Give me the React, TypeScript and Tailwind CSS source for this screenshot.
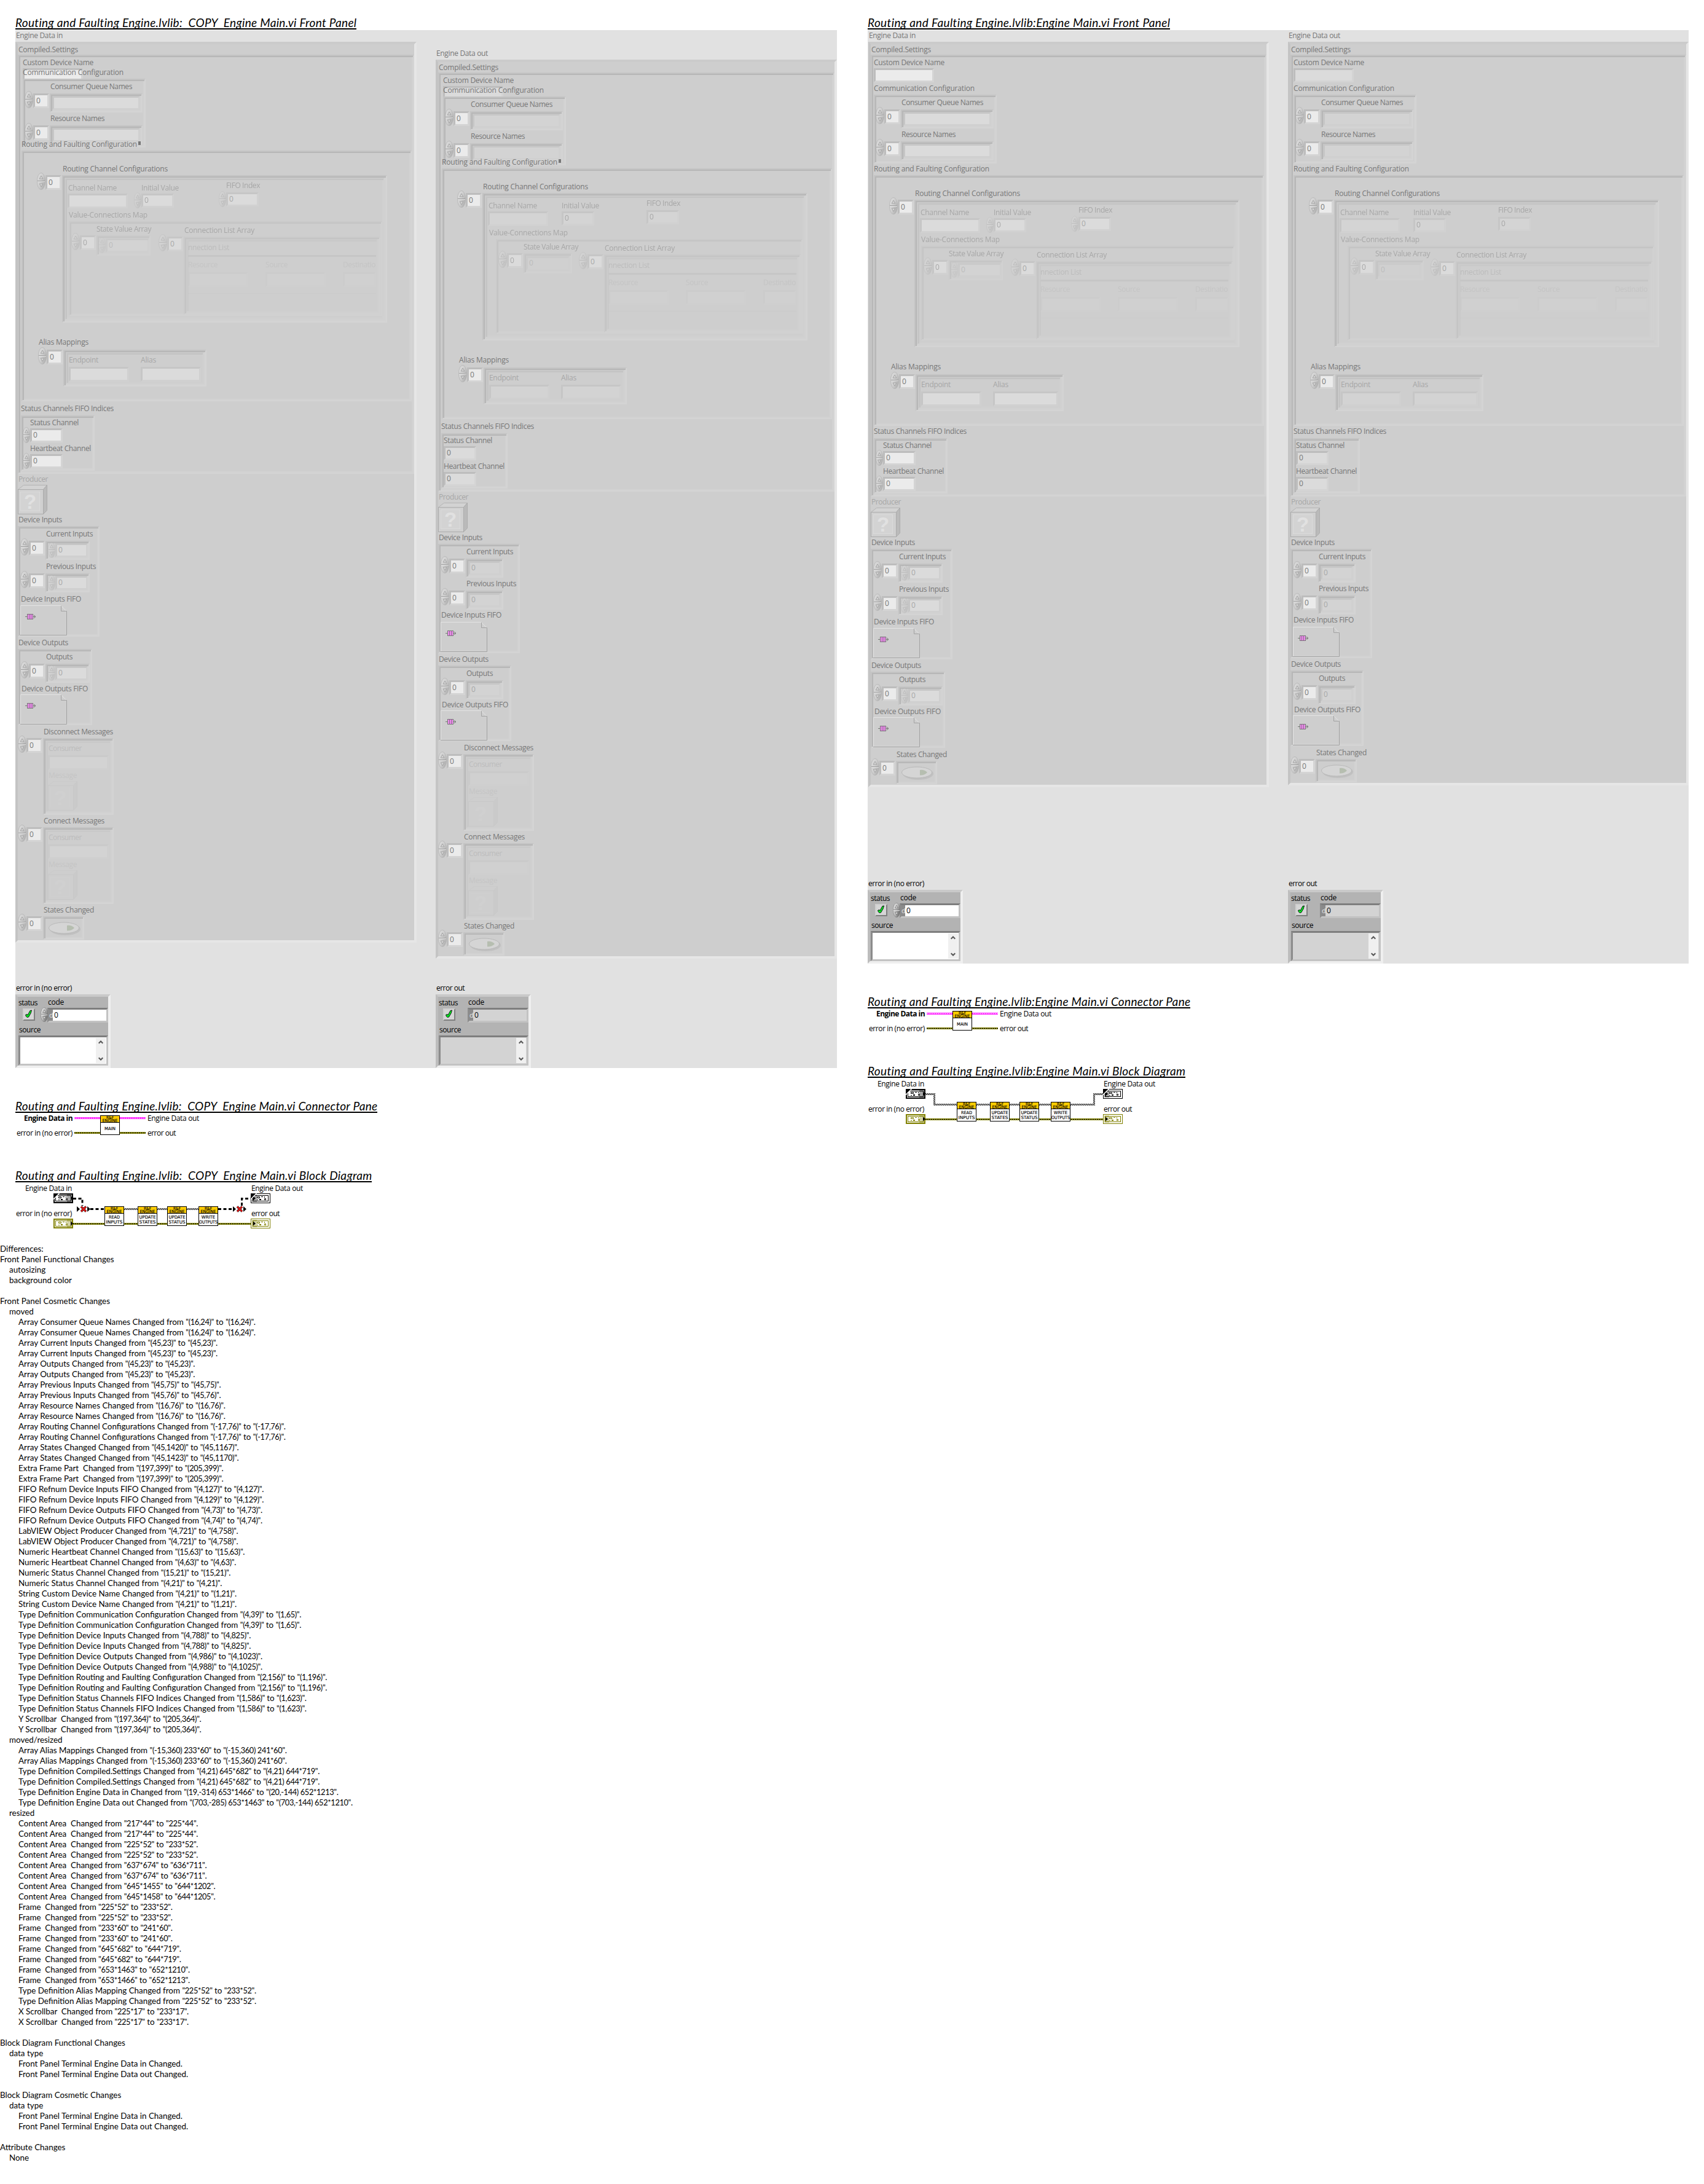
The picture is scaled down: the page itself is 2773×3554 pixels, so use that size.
import React, { useLayoutEffect, useRef } from "react";

type Box = { x: number; y: number; w?: number; h?: number };

const place = ({ x, y, w, h }: Box): React.CSSProperties => ({ left: x, top: y, width: w, height: h });

/* Text whose tracking is adjusted after measuring so that it spans a given width. */
function Fit({ text, w, className = "" }: { text: string; w?: number; className?: string }) {
  const ref = useRef<HTMLSpanElement>(null);
  useLayoutEffect(() => {
    const el = ref.current;
    if (!el || !w) return;
    el.style.letterSpacing = "0px";
    const natural = el.getBoundingClientRect().width;
    el.style.letterSpacing = `${(w - natural) / text.length}px`;
  }, [text, w]);
  return (
    <span ref={ref} className={`inline-block whitespace-pre ${className}`}>
      {text}
    </span>
  );
}

const labelWidths: Record<string, number> = {
  "Engine Data in": 76,
  "Engine Data out": 84,
  "Compiled.Settings": 97,
  "Custom Device Name": 115,
  "Communication Configuration": 164,
  "Consumer Queue Names": 133,
  "Resource Names": 88,
  "Routing and Faulting Configuration": 188,
  "Routing Channel Configurations": 171,
  "Channel Name": 79,
  "Initial Value": 61,
  "FIFO Index": 55,
  "Value-Connections Map": 128,
  "State Value Array": 89,
  "Connection List Array": 114,
  "nnection List": 67,
  Resource: 48,
  Source: 36,
  Destinatio: 53,
  "Alias Mappings": 81,
  Endpoint: 48,
  Alias: 25,
  "Status Channels FIFO Indices": 151,
  "Status Channel": 79,
  "Heartbeat Channel": 99,
  Producer: 48,
  "Device Inputs": 71,
  "Current Inputs": 76,
  "Previous Inputs": 81,
  "Device Inputs FIFO": 98,
  "Device Outputs": 81,
  Outputs: 43,
  "Device Outputs FIFO": 108,
  "Disconnect Messages": 113,
  "Connect Messages": 99,
  Consumer: 54,
  Message: 46,
  "States Changed": 82,
  "error in (no error)": 91,
  "error out": 46,
  status: 31,
  code: 26,
  source: 35,
};

/* Caption anchored at its left edge and vertical centre. */
function Label({ x, y, t, dark, bold, w }: { x: number; y: number; t: string; dark?: boolean; bold?: boolean; w?: number }) {
  return (
    <div
      className={`absolute h-4 font-['Open_Sans',sans-serif] text-[12px] leading-4 whitespace-pre ${dark ? "text-black" : "text-[#777777]"} ${bold ? "font-bold" : ""}`}
      style={place({ x, y: y - 8 })}
    >
      <Fit text={t} w={w ?? labelWidths[t]} />
    </div>
  );
}

function Group({ x, y, className = "", children }: { x: number; y: number; className?: string; children: React.ReactNode }) {
  return (
    <div className={`absolute ${className}`} style={place({ x, y })}>
      {children}
    </div>
  );
}

/* Sunken LabVIEW border, four pixels thick. */
function Frame(b: Box) {
  return (
    <div
      className="absolute border-2 border-t-[#c4c4c4] border-r-[#d4d4d4] border-b-[#d4d4d4] border-l-[#c4c4c4] shadow-[inset_2px_2px_0_#b7b7b7,inset_-2px_-2px_0_#d2d2d2]"
      style={place(b)}
    />
  );
}

function Spinner({ x, y, w = 14, h = 28, strong }: Box & { strong?: boolean }) {
  return (
    <svg className={`absolute ${strong ? "" : "opacity-50"}`} style={place({ x, y, w, h })} viewBox="0 0 14 28" preserveAspectRatio="none">
      <defs>
        <linearGradient id={strong ? "spin-strong" : "spin"} x1="0" x2="1" y1="0" y2="0.6">
          <stop offset="0" stopColor="#f0f0f0" />
          <stop offset="0.55" stopColor={strong ? "#bdbdbd" : "#d2d2d2"} />
          <stop offset="1" stopColor={strong ? "#6f6f6f" : "#949494"} />
        </linearGradient>
      </defs>
      <ellipse cx="7" cy="14" rx="6.6" ry="13.6" fill={strong ? "url(#spin-strong)" : "url(#spin)"} stroke={strong ? "#7a7a7a" : "#979797"} strokeWidth="0.7" />
      <path d="M1 13.5H13" stroke="#6c6c6c" />
      <path d="M1 14.5H13" stroke="#f4f4f4" />
      <path d="M7 5L9.8 10H4.2Z" fill="#dedede" stroke="#666" strokeWidth="0.8" />
      <path d="M7 23L4.2 18H9.8Z" fill="#dedede" stroke="#666" strokeWidth="0.8" />
    </svg>
  );
}

/* Sunken entry field; the coordinates are those of the fill, the bevel surrounds it. */
function Field({ x, y, w = 20, h = 17, value, indicator }: Box & { value?: string; indicator?: boolean }) {
  return (
    <>
      <div
        className="absolute border-3 border-t-[#bdbdbd] border-r-[#d4d4d4] border-b-[#d4d4d4] border-l-[#bdbdbd]"
        style={place({ x: x - 3, y: y - 3, w: w + 6, h: h + 6 })}
      >
        <div className={`size-full ${indicator ? "bg-[#dbdbdb]" : "bg-[#ebebeb]"}`} />
      </div>
      {value !== undefined && <Label x={x + 2} y={y + h / 2 - 0.5} t={value} />}
    </>
  );
}

function Numeric({ x, y, w = 47, out, value = "0" }: Box & { out?: boolean; value?: string }) {
  return (
    <>
      <Field x={x} y={y} w={w} h={17} value={value} indicator={out} />
      {!out && <Spinner x={x - 15} y={y - 5} w={12} h={26} />}
    </>
  );
}

/* Array shell: index control on the left, framed element area on the right. */
function ArrayShell({ x, y, w = 0, h = 0, children }: Box & { children?: React.ReactNode }) {
  return (
    <Group x={x} y={y}>
      <Field x={-24} y={3} w={20} h={18} value="0" />
      <Spinner x={-41} y={-4} w={14} h={28} />
      <Frame x={0} y={0} w={w} h={h} />
      {children}
    </Group>
  );
}

function Cube({ x, y }: Box) {
  return (
    <svg className="absolute opacity-50" style={place({ x, y, w: 48, h: 48 })} viewBox="0 0 48 48">
      <path d="M0.5 7.5L9.5 0.5H47.5L41.5 7.5Z" fill="#d8d8d8" stroke="#9c9c9c" />
      <path d="M41.5 7.5L47.5 0.5V41.5L41.5 47.5Z" fill="#a8a8a8" stroke="#8c8c8c" />
      <rect x="0.5" y="7.5" width="41" height="40" fill="#d2d2d2" stroke="#8c8c8c" />
      <rect x="4.5" y="11.5" width="31" height="31" fill="#d9d9d9" stroke="#e8e8e8" />
      <text x="20" y="39" textAnchor="middle" className="fill-[#f4f4f4] font-['Liberation_Sans',sans-serif] text-[33px] font-bold">
        ?
      </text>
    </svg>
  );
}

function FifoRef({ x, y }: Box) {
  return (
    <svg className="absolute" style={place({ x, y, w: 76, h: 49 })} viewBox="0 0 76 49">
      <path d="M0.5 48V0.5H66L75 9.5" fill="none" stroke="#e4e4e4" />
      <path d="M66.5 1V9.5H75.5V48.5H0" fill="none" stroke="#a2a2a2" />
      <path d="M8 18.5H25M22 16L25 18.5L22 21" fill="none" stroke="#777" />
      <rect x="11.5" y="14.5" width="9" height="8" fill="#f08cf0" stroke="#777" />
      <path d="M14.5 14V23M17.5 14V23" stroke="#8a6a8a" />
    </svg>
  );
}

function MessageArray({ y, label, out }: { y: number; label: string; out?: boolean }) {
  return (
    <Group x={45} y={y}>
      <Label x={1} y={-10.5} t={label} />
      <ArrayShell x={0} y={0} w={115} h={125}>
        <div className="absolute opacity-20">
          <Frame x={4} y={4} w={107} h={117} />
          <Label x={9} y={16.5} t="Consumer" />
          <Field x={11} y={31} w={93} h={18} indicator={out} />
        </div>
        <div className="absolute opacity-10">
          <Label x={9} y={61} t="Message" />
        </div>
        <div className="absolute opacity-15">
          <Cube x={8} y={70} />
        </div>
      </ArrayShell>
    </Group>
  );
}

function StatesChanged({ y }: { y: number }) {
  return (
    <Group x={45} y={y}>
      <Label x={1} y={-10.5} t="States Changed" />
      <ArrayShell x={0} y={0} w={67} h={38}>
        <svg className="absolute opacity-50" style={place({ x: 4, y: 5, w: 58, h: 28 })} viewBox="0 0 58 28">
          <ellipse cx="32" cy="16" rx="25" ry="10" fill="#b4b4b4" />
          <ellipse cx="30" cy="14" rx="24.5" ry="9" fill="#dcdcdc" stroke="#a5a5a5" />
          <path d="M35 10Q42 9 47 14Q42 19 35 18.5Z" fill="#9fb094" />
        </svg>
      </ArrayShell>
    </Group>
  );
}

/* Numeric array with one dimmed element. */
function NumericArray({ y, label, out }: { y: number; label: string; out?: boolean }) {
  return (
    <>
      <Label x={46} y={y - 11} t={label} />
      <ArrayShell x={45} y={y} w={out ? 61 : 72} h={31}>
        <div className="absolute opacity-45">
          <Numeric x={out ? 7 : 19} y={7} w={47} out={out} />
        </div>
      </ArrayShell>
    </>
  );
}

function RoutingFrame({ x, y, out, aliasWidth }: Box & { out?: boolean; aliasWidth: number }) {
  const wide = aliasWidth - 233;
  return (
    <Group x={x} y={y}>
      <Frame x={0} y={0} w={635} h={408} />
      <Label x={67} y={30} t="Routing Channel Configurations" />
      <ArrayShell x={66} y={40} w={529} h={240} />
      <div className="absolute opacity-45">
        <Frame x={70} y={44} w={521} h={232} />
        <Label x={76} y={61} t="Channel Name" />
        <Field x={78} y={73} w={92} h={18} indicator={out} />
        <Label x={195} y={61} t="Initial Value" />
        <Numeric x={198} y={73} out={out} />
        <Label x={333} y={57} t="FIFO Index" />
        <Numeric x={336} y={71} out={out} />
        <Label x={77} y={105} t="Value-Connections Map" />
        <Frame x={out ? 88 : 77} y={115} w={out ? 499 : 510} h={154} />
        <Label x={out ? 133 : 122} y={128} t="State Value Array" />
        <ArrayShell x={out ? 133 : 122} y={138} w={out ? 79 : 88} h={33}>
          <div className="absolute opacity-45">
            <Numeric x={out ? 7 : 18} y={8} w={65} out={out} />
          </div>
        </ArrayShell>
        <Label x={265} y={130} t="Connection List Array" />
        <ArrayShell x={264} y={140} w={320} h={127} />
      </div>
      <div className="absolute opacity-20">
        <Frame x={268} y={144} w={312} h={119} />
        <Label x={271} y={158} t="nnection List" />
        <div className="absolute h-[3px] w-[306px] bg-[#a8a8a8]" style={place({ x: 271, y: 170 })} />
      </div>
      <div className="absolute opacity-10">
        <Label x={271} y={186} t="Resource" />
        <Label x={397} y={186} t="Source" />
        <Label x={523} y={186} t="Destinatio" />
        <Field x={274} y={201} w={92} h={18} indicator />
        <Field x={400} y={201} w={92} h={18} indicator />
        <Field x={526} y={201} w={48} h={18} indicator />
        <div className="absolute h-px w-[306px] bg-[#a8a8a8]" style={place({ x: 271, y: 232 })} />
      </div>
      <Label x={28} y={312} t="Alias Mappings" />
      <ArrayShell x={68} y={324} w={aliasWidth} h={60} />
      <div className="absolute opacity-45">
        <Frame x={72} y={328} w={aliasWidth - 8} h={52} />
        <Label x={77} y={341} t="Endpoint" />
        <Field x={80} y={355} w={92} h={18} indicator={out} />
        <Label x={194} y={341} t="Alias" />
        <Field x={197} y={355} w={92 + wide} h={18} indicator={out} />
      </div>
    </Group>
  );
}

/* The big "Engine Data" cluster with all of its nested controls. */
function EngineData({ x, y, w, h, out, old }: { x: number; y: number; w: number; h: number; out?: boolean; old?: boolean }) {
  const inset = old ? 8 : 5;
  const grow = old ? 0 : 37;
  return (
    <Group x={x} y={y}>
      <Label x={1} y={-10} t={out ? "Engine Data out" : "Engine Data in"} />
      <div
        className="absolute border-4 border-t-[#cbcbcb] border-r-[#e6e6e6] border-b-[#e6e6e6] border-l-[#c4c4c4] bg-[#cecece]"
        style={place({ x: 0, y: 0, w, h })}
      />
      <Label x={5} y={13} t="Compiled.Settings" />
      <Group x={4} y={21}>
        <Frame x={0} y={0} w={w - 8} h={old ? 682 : 719} />
        <Label x={inset} y={13} t="Custom Device Name" />
        <Field x={inset + 3} y={25} w={92} h={17} indicator={out} />
        <Group x={inset} y={old ? 39 : 65}>
          <div className="absolute h-[108px] w-[196px] bg-[#cecece]" style={place({ x: 2, y: 2 })} />
          <Frame x={0} y={0} w={200} h={112} />
          <Label x={45} y={12.5} t="Consumer Queue Names" />
          <ArrayShell x={44} y={24} w={151} h={31}>
            <div className="absolute opacity-45">
              <Field x={7} y={7} w={137} h={17} indicator={out} />
            </div>
          </ArrayShell>
          <Label x={45} y={64.5} t="Resource Names" />
          <ArrayShell x={44} y={76} w={151} h={31}>
            <div className="absolute opacity-45">
              <Field x={7} y={7} w={137} h={17} indicator={out} />
            </div>
          </ArrayShell>
        </Group>
        <Label x={inset} y={old ? 29 : 55} t="Communication Configuration" />
        <Label x={old ? 6 : 5} y={old ? 146 : 186} t="Routing and Faulting Configuration" />
        {old && <div className="absolute h-[6px] w-1 bg-[#777777]" style={place({ x: 196, y: 141 })} />}
        <RoutingFrame x={old ? 6 : 5} y={old ? 156 : 196} out={out} aliasWidth={old ? 233 : 241} />
        <Group x={5} y={576 + grow}>
          <Label x={0} y={0} t="Status Channels FIFO Indices" />
          <Frame x={0} y={11} w={out ? 108 : 120} h={90} />
          <Label x={out ? 4 : 15} y={23} t="Status Channel" />
          <Numeric x={out ? 7 : 18} y={35} out={out} />
          <Label x={out ? 4 : 15} y={65} t="Heartbeat Channel" />
          <Numeric x={out ? 7 : 18} y={77} out={out} />
        </Group>
      </Group>
      <Group x={0} y={grow}>
        <div className="absolute opacity-45">
          <Label x={5} y={711.5} t="Producer" />
        </div>
        <Cube x={4} y={721} />
        <Label x={5} y={777.5} t="Device Inputs" />
        <Group x={4} y={788}>
          <Frame x={0} y={0} w={133} h={out ? 178 : 180} />
          <NumericArray y={24} label="Current Inputs" out={out} />
          <NumericArray y={out ? 76 : 77} label="Previous Inputs" out={out} />
          <Label x={5} y={out ? 116 : 118.5} t="Device Inputs FIFO" />
          <FifoRef x={4} y={out ? 127 : 129} />
        </Group>
        <Group x={0} y={out ? -2 : 0}>
          <Label x={5} y={978} t="Device Outputs" />
          <Group x={4} y={988}>
            <Frame x={0} y={0} w={out ? 119 : 121} h={out ? 123 : 124} />
            <NumericArray y={24} label="Outputs" out={out} />
            <Label x={6} y={out ? 64 : 65} t="Device Outputs FIFO" />
            <FifoRef x={4} y={out ? 73 : 74} />
          </Group>
        </Group>
      </Group>
      <Group x={0} y={out ? -3 : 0}>
        {old && <MessageArray y={1133} label="Disconnect Messages" out={out} />}
        {old && <MessageArray y={1278} label="Connect Messages" out={out} />}
        <StatesChanged y={old ? 1423 : 1170} />
      </Group>
    </Group>
  );
}

function ErrorCluster({ x, y, out }: { x: number; y: number; out?: boolean }) {
  const fill = out ? "bg-[#d3d3d3]" : "bg-white";
  return (
    <Group x={x} y={y}>
      <Label x={1} y={-10} t={out ? "error out" : "error in (no error)"} dark />
      <div
        className="absolute h-[120px] w-[155px] border-4 border-t-[#c9c9c9] border-r-[#efefef] border-b-[#efefef] border-l-[#bdbdbd] bg-[#b3b3b3]"
        style={place({ x: 0, y: 0 })}
      />
      <Label x={5} y={14} t="status" dark />
      <Label x={53} y={13} t="code" dark />
      <div
        className="absolute h-[20px] w-[20px] border-2 border-t-[#cfcfcf] border-r-[#7f7f7f] border-b-[#7f7f7f] border-l-[#cfcfcf] bg-[#d6d6d6]"
        style={place({ x: 12, y: 23 })}
      />
      <svg className="absolute" style={place({ x: 15, y: 25, w: 13, h: 15 })} viewBox="0 0 13 15">
        <path d="M1.5 8.5L4 7.5L5 9L9 1.5L11.5 1L10 6L6.5 12L4 12.5L2.5 11Z" fill="#00f020" stroke="#111" strokeWidth="1" />
      </svg>
      <div
        className="absolute flex h-[24px] w-[99px] border-[3px] border-t-[#7e7e7e] border-r-[#c3c3c3] border-b-[#c3c3c3] border-l-[#8c8c8c]"
        style={place({ x: 52, y: 22 })}
      >
        <span className="h-full w-[6px] shrink-0 bg-[#8a8a8a] font-['Open_Sans',sans-serif] text-[11px] leading-[18px] text-[#e6e6e6]">d</span>
        <span className={`h-full grow pl-[2px] font-['Open_Sans',sans-serif] text-[12px] leading-[18px] text-black ${fill}`}>0</span>
      </div>
      {!out && <Spinner x={41} y={21} w={12} h={24} strong />}
      <Label x={6} y={57.5} t="source" dark />
      <div
        className={`absolute flex h-[49px] w-[146px] justify-end border-[3px] border-t-[#7e7e7e] border-r-[#c3c3c3] border-b-[#c3c3c3] border-l-[#8c8c8c] ${fill}`}
        style={place({ x: 5, y: 67 })}
      >
        <div className="my-px mr-px flex h-[41px] w-[16px] flex-col items-center justify-between bg-[#f0f0f0] py-[4px]">
          <svg className="h-[6px] w-[8px]" viewBox="0 0 8 6">
            <path d="M0.7 4.8L4 1.5L7.3 4.8" fill="none" stroke="#555" strokeWidth="2" />
          </svg>
          <svg className="h-[6px] w-[8px]" viewBox="0 0 8 6">
            <path d="M0.7 1.2L4 4.5L7.3 1.2" fill="none" stroke="#555" strokeWidth="2" />
          </svg>
        </div>
      </div>
    </Group>
  );
}

function Title({ text, w }: { text: string; w: number }) {
  return (
    <h2 className="h-6 w-fit overflow-hidden border-b-2 border-black pt-[2px] font-['Lato',sans-serif] text-[19px] leading-[22px] font-normal text-black italic">
      <Fit text={text} w={w} />
    </h2>
  );
}

/* 32 x 32 VI icon. */
function ViIcon({ x, y, lines }: { x: number; y: number; lines: string[] }) {
  return (
    <g transform={`translate(${x} ${y})`} className="stroke-black font-['DejaVu_Sans',sans-serif] text-[7.2px]" strokeWidth="0">
      <rect x="0.5" y="0.5" width="31" height="31" fill="#fff" strokeWidth="1" />
      <rect x="1" y="1" width="30" height="10.5" fill="#ffcc00" stroke="none" />
      <path d="M0 11.5H32" strokeWidth="1" />
      <g strokeWidth="0.15">
        <text x="16" y="6.2" textAnchor="middle" textLength="12" lengthAdjust="spacingAndGlyphs">R&amp;F</text>
        <text x="16" y="11.1" textAnchor="middle" textLength="25" lengthAdjust="spacingAndGlyphs">ENGINE</text>
        {lines.map((t, i) => (
          <text
            key={t}
            x="16"
            y={(lines.length === 1 ? 24.2 : 20.1) + i * 8}
            textAnchor="middle"
            textLength={t.length > 6 ? 30 : t.length * 4.5}
            lengthAdjust="spacingAndGlyphs"
          >
            {t}
          </text>
        ))}
      </g>
    </g>
  );
}

/* Block-diagram terminal for a cluster control or indicator. */
function Terminal({ x, y, color, out, corner }: { x: number; y: number; color: string; out?: boolean; corner?: boolean }) {
  const s = out ? 1 : 2;
  return (
    <g transform={`translate(${x} ${y})`}>
      <rect x={s / 2} y={s / 2} width={32 - s} height={16 - s} fill="#fff" stroke={color} strokeWidth={s} />
      <rect x="3.5" y="3.5" width="25" height="9" fill="#fff" stroke={color} />
      <rect x={out ? 2 : 22} y="2" width="8" height="12" fill={color} opacity="0.35" />
      <path d={out ? "M4 4.5L8 8L4 11.5Z" : "M28 4.5L32 8L28 11.5Z"} fill="#000" />
      <g fill="none" stroke={color} transform={out ? "translate(2 0)" : ""}>
        <path d="M8.5 5.5H12.5V7.5H8.5ZM15 5.5H18M20.5 5V7M8 10.5H10M20.5 8.5H22.5V10.5H20.5Z" />
        <path d="M12 10H15" strokeWidth="2" />
      </g>
      {corner && (
        <>
          <path d="M0 0H9L0 9Z" fill={color} />
          <path d="M9.5 0L0 9.5" stroke="#fff" strokeWidth="1.4" />
        </>
      )}
    </g>
  );
}

function ErrorWire({ x1, x2, y }: { x1: number; x2: number; y: number }) {
  return (
    <>
      <path d={`M${x1} ${y}H${x2}`} stroke="#808000" strokeWidth="3" />
      <path d={`M${x1} ${y}H${x2}`} stroke="#e8e84a" strokeWidth="1" />
      <path d={`M${x1} ${y}H${x2}`} stroke="#000" strokeWidth="1" strokeDasharray="2 1" />
    </>
  );
}

function ConnectorPane() {
  return (
    <div className="relative h-[89px] w-[300px]">
      <svg className="absolute top-0 left-0 h-[60px] w-[240px]" viewBox="0 0 240 60">
        <path d="M96 8.5H212" stroke="#ff00ff" strokeWidth="3" />
        <path d="M96 8.5H212" stroke="#fff" strokeWidth="1" strokeDasharray="2 1" />
        <ErrorWire x1={96} x2={212} y={32.5} />
        <ViIcon x={138} y={4} lines={["MAIN"]} />
      </svg>
      <Label x={14} y={9} t="Engine Data in" dark bold w={79} />
      <Label x={2} y={33} t="error in (no error)" dark />
      <Label x={215} y={9} t="Engine Data out" dark />
      <Label x={215} y={33} t="error out" dark />
    </div>
  );
}

function BrokenMark({ x, y }: { x: number; y: number }) {
  return (
    <g transform={`translate(${x} ${y})`}>
      <path d="M-11 -4.5L-6 0L-11 4.5ZM6 -4.5L11 0L6 4.5Z" fill="#000" />
      <path d="M-4 -4L4 4M4 -4L-4 4" stroke="#000" strokeWidth="3.4" />
      <path d="M-4 -4L4 4M4 -4L-4 4" stroke="#f01818" strokeWidth="2.2" />
    </g>
  );
}

/* Black wire: hatched diagonally, or coarsely dashed when it is broken. */
function ClusterWire({ d, broken }: { d: string; broken?: boolean }) {
  return <path d={d} fill="none" stroke={broken ? "#000" : "url(#hatch)"} strokeWidth="3" strokeDasharray={broken ? "5 3.5" : undefined} />;
}

function BlockDiagram({ broken }: { broken?: boolean }) {
  return (
    <div className="relative h-[100px] w-[500px]">
      <svg className="absolute top-0 left-0 h-[90px] w-[430px]" viewBox="0 0 430 90">
        <defs>
          <pattern id="hatch" width="3" height="3" patternUnits="userSpaceOnUse">
            <rect width="3" height="3" fill="#fff" />
            <path d="M-0.5 3.5L3.5 -0.5M-1 1L1 -1M2 4L4 2" stroke="#000" strokeWidth="1.2" />
          </pattern>
        </defs>
        {broken ? (
          <>
            <ClusterWire broken d="M94 26.5H109V38" />
            <ClusterWire broken d="M122 43.5H145" />
            <ClusterWire broken d="M330 43.5H356" />
            <ClusterWire broken d="M368.5 38V26.5H383" />
            <BrokenMark x={111} y={43.5} />
            <BrokenMark x={365} y={43.5} />
          </>
        ) : (
          <>
            <ClusterWire d="M94 26.5H108.5V43.5H145" />
            <ClusterWire d="M330 43.5H368.5V26.5H383" />
          </>
        )}
        <ClusterWire d="M177 43.5H199M231 43.5H247M279 43.5H298" />
        <ErrorWire x1={94} x2={383} y={67.5} />
        <Terminal x={62} y={18} color="#000" corner />
        <Terminal x={62} y={59} color="#808000" />
        <Terminal x={383} y={18} color="#000" out corner />
        <Terminal x={383} y={59} color="#808000" out />
        <ViIcon x={145} y={39} lines={["READ", "INPUTS"]} />
        <ViIcon x={199} y={39} lines={["UPDATE", "STATES"]} />
        <ViIcon x={247} y={39} lines={["UPDATE", "STATUS"]} />
        <ViIcon x={298} y={39} lines={["WRITE", "OUTPUTS"]} />
      </svg>
      <Label x={16} y={10} t="Engine Data in" dark />
      <Label x={1} y={51} t="error in (no error)" dark />
      <Label x={384} y={10} t="Engine Data out" dark />
      <Label x={384} y={51} t="error out" dark />
    </div>
  );
}

type Entry = [number, string];

const twice = (items: string[]): Entry[] => items.flatMap((t): Entry[] => [[2, t], [2, t]]);
const once = (items: string[]): Entry[] => items.map((t): Entry => [2, t]);

const differences: Entry[] = [
  [0, "Differences:"],
  [0, "Front Panel Functional Changes"],
  [1, "autosizing"],
  [1, "background color"],
  [0, ""],
  [0, "Front Panel Cosmetic Changes"],
  [1, "moved"],
  ...twice([
    'Array Consumer Queue Names Changed from "(16,24)" to "(16,24)".',
    'Array Current Inputs Changed from "(45,23)" to "(45,23)".',
    'Array Outputs Changed from "(45,23)" to "(45,23)".',
  ]),
  ...once([
    'Array Previous Inputs Changed from "(45,75)" to "(45,75)".',
    'Array Previous Inputs Changed from "(45,76)" to "(45,76)".',
  ]),
  ...twice([
    'Array Resource Names Changed from "(16,76)" to "(16,76)".',
    'Array Routing Channel Configurations Changed from "(-17,76)" to "(-17,76)".',
  ]),
  ...once([
    'Array States Changed Changed from "(45,1420)" to "(45,1167)".',
    'Array States Changed Changed from "(45,1423)" to "(45,1170)".',
  ]),
  ...twice(['Extra Frame Part  Changed from "(197,399)" to "(205,399)".']),
  ...once([
    'FIFO Refnum Device Inputs FIFO Changed from "(4,127)" to "(4,127)".',
    'FIFO Refnum Device Inputs FIFO Changed from "(4,129)" to "(4,129)".',
    'FIFO Refnum Device Outputs FIFO Changed from "(4,73)" to "(4,73)".',
    'FIFO Refnum Device Outputs FIFO Changed from "(4,74)" to "(4,74)".',
  ]),
  ...twice(['LabVIEW Object Producer Changed from "(4,721)" to "(4,758)".']),
  ...once([
    'Numeric Heartbeat Channel Changed from "(15,63)" to "(15,63)".',
    'Numeric Heartbeat Channel Changed from "(4,63)" to "(4,63)".',
    'Numeric Status Channel Changed from "(15,21)" to "(15,21)".',
    'Numeric Status Channel Changed from "(4,21)" to "(4,21)".',
  ]),
  ...twice([
    'String Custom Device Name Changed from "(4,21)" to "(1,21)".',
    'Type Definition Communication Configuration Changed from "(4,39)" to "(1,65)".',
    'Type Definition Device Inputs Changed from "(4,788)" to "(4,825)".',
  ]),
  ...once([
    'Type Definition Device Outputs Changed from "(4,986)" to "(4,1023)".',
    'Type Definition Device Outputs Changed from "(4,988)" to "(4,1025)".',
  ]),
  ...twice([
    'Type Definition Routing and Faulting Configuration Changed from "(2,156)" to "(1,196)".',
    'Type Definition Status Channels FIFO Indices Changed from "(1,586)" to "(1,623)".',
    'Y Scrollbar  Changed from "(197,364)" to "(205,364)".',
  ]),
  [1, "moved/resized"],
  ...twice([
    'Array Alias Mappings Changed from "(-15,360) 233*60" to "(-15,360) 241*60".',
    'Type Definition Compiled.Settings Changed from "(4,21) 645*682" to "(4,21) 644*719".',
  ]),
  ...once([
    'Type Definition Engine Data in Changed from "(19,-314) 653*1466" to "(20,-144) 652*1213".',
    'Type Definition Engine Data out Changed from "(703,-285) 653*1463" to "(703,-144) 652*1210".',
  ]),
  [1, "resized"],
  ...twice([
    'Content Area  Changed from "217*44" to "225*44".',
    'Content Area  Changed from "225*52" to "233*52".',
    'Content Area  Changed from "637*674" to "636*711".',
  ]),
  ...once([
    'Content Area  Changed from "645*1455" to "644*1202".',
    'Content Area  Changed from "645*1458" to "644*1205".',
  ]),
  ...twice([
    'Frame  Changed from "225*52" to "233*52".',
    'Frame  Changed from "233*60" to "241*60".',
    'Frame  Changed from "645*682" to "644*719".',
  ]),
  ...once(['Frame  Changed from "653*1463" to "652*1210".', 'Frame  Changed from "653*1466" to "652*1213".']),
  ...twice([
    'Type Definition Alias Mapping Changed from "225*52" to "233*52".',
    'X Scrollbar  Changed from "225*17" to "233*17".',
  ]),
  [0, ""],
  [0, "Block Diagram Functional Changes"],
  [1, "data type"],
  [2, "Front Panel Terminal Engine Data in Changed."],
  [2, "Front Panel Terminal Engine Data out Changed."],
  [0, ""],
  [0, "Block Diagram Cosmetic Changes"],
  [1, "data type"],
  [2, "Front Panel Terminal Engine Data in Changed."],
  [2, "Front Panel Terminal Engine Data out Changed."],
  [0, ""],
  [0, "Attribute Changes"],
  [1, "None"],
];

const indents = ["pl-0", "pl-[15px]", "pl-[30px]"];

/* Quoted coordinates are set slightly smaller and tighter than the words around them. */
function DifferenceLine({ level, text }: { level: number; text: string }) {
  return (
    <p className={`h-[17px] whitespace-pre ${indents[level]}`}>
      {text.split(/("[^"]*")/).map((part, i) =>
        part.startsWith('"') ? (
          <span key={i} className="text-[12.8px] tracking-[-0.36px]">
            {part}
          </span>
        ) : (
          part
        ),
      )}
    </p>
  );
}

export default function App() {
  return (
    <div className="flex h-[3554px] w-[2773px] bg-white">
      <div className="flex w-[1412px] flex-col">
        <section className="flex flex-col pt-6 pl-[25px]">
          <Title text="Routing and Faulting Engine.lvlib:  COPY  Engine Main.vi Front Panel" w={555} />
          <div className="relative mt-px h-[1689px] w-[1337px] bg-[#e1e1e1]">
            <EngineData x={0} y={19} w={653} h={1466} old />
            <EngineData x={684} y={48} w={653} h={1463} old out />
            <ErrorCluster x={0} y={1569} />
            <ErrorCluster x={684} y={1569} out />
          </div>
        </section>
        <section className="flex flex-col pt-[49px] pl-[25px]">
          <Title text="Routing and Faulting Engine.lvlib:  COPY  Engine Main.vi Connector Pane" w={589} />
          <ConnectorPane />
          <Title text="Routing and Faulting Engine.lvlib:  COPY  Engine Main.vi Block Diagram" w={580} />
          <BlockDiagram broken />
        </section>
        <section className="flex flex-col font-['Lato',sans-serif] text-[13.4px] leading-[17px] text-black">
          {differences.map(([level, text], i) => (
            <DifferenceLine key={i} level={level} text={text} />
          ))}
        </section>
      </div>
      <div className="flex flex-col">
        <section className="flex flex-col pt-6">
          <Title text="Routing and Faulting Engine.lvlib:Engine Main.vi Front Panel" w={492} />
          <div className="relative mt-px h-[1519px] w-[1336px] bg-[#e1e1e1]">
            <EngineData x={1} y={19} w={652} h={1213} />
            <EngineData x={684} y={19} w={652} h={1210} out />
            <ErrorCluster x={0} y={1399} />
            <ErrorCluster x={684} y={1399} out />
          </div>
        </section>
        <section className="flex flex-col pt-[49px]">
          <Title text="Routing and Faulting Engine.lvlib:Engine Main.vi Connector Pane" w={525} />
          <ConnectorPane />
          <Title text="Routing and Faulting Engine.lvlib:Engine Main.vi Block Diagram" w={517} />
          <BlockDiagram />
        </section>
      </div>
    </div>
  );
}
